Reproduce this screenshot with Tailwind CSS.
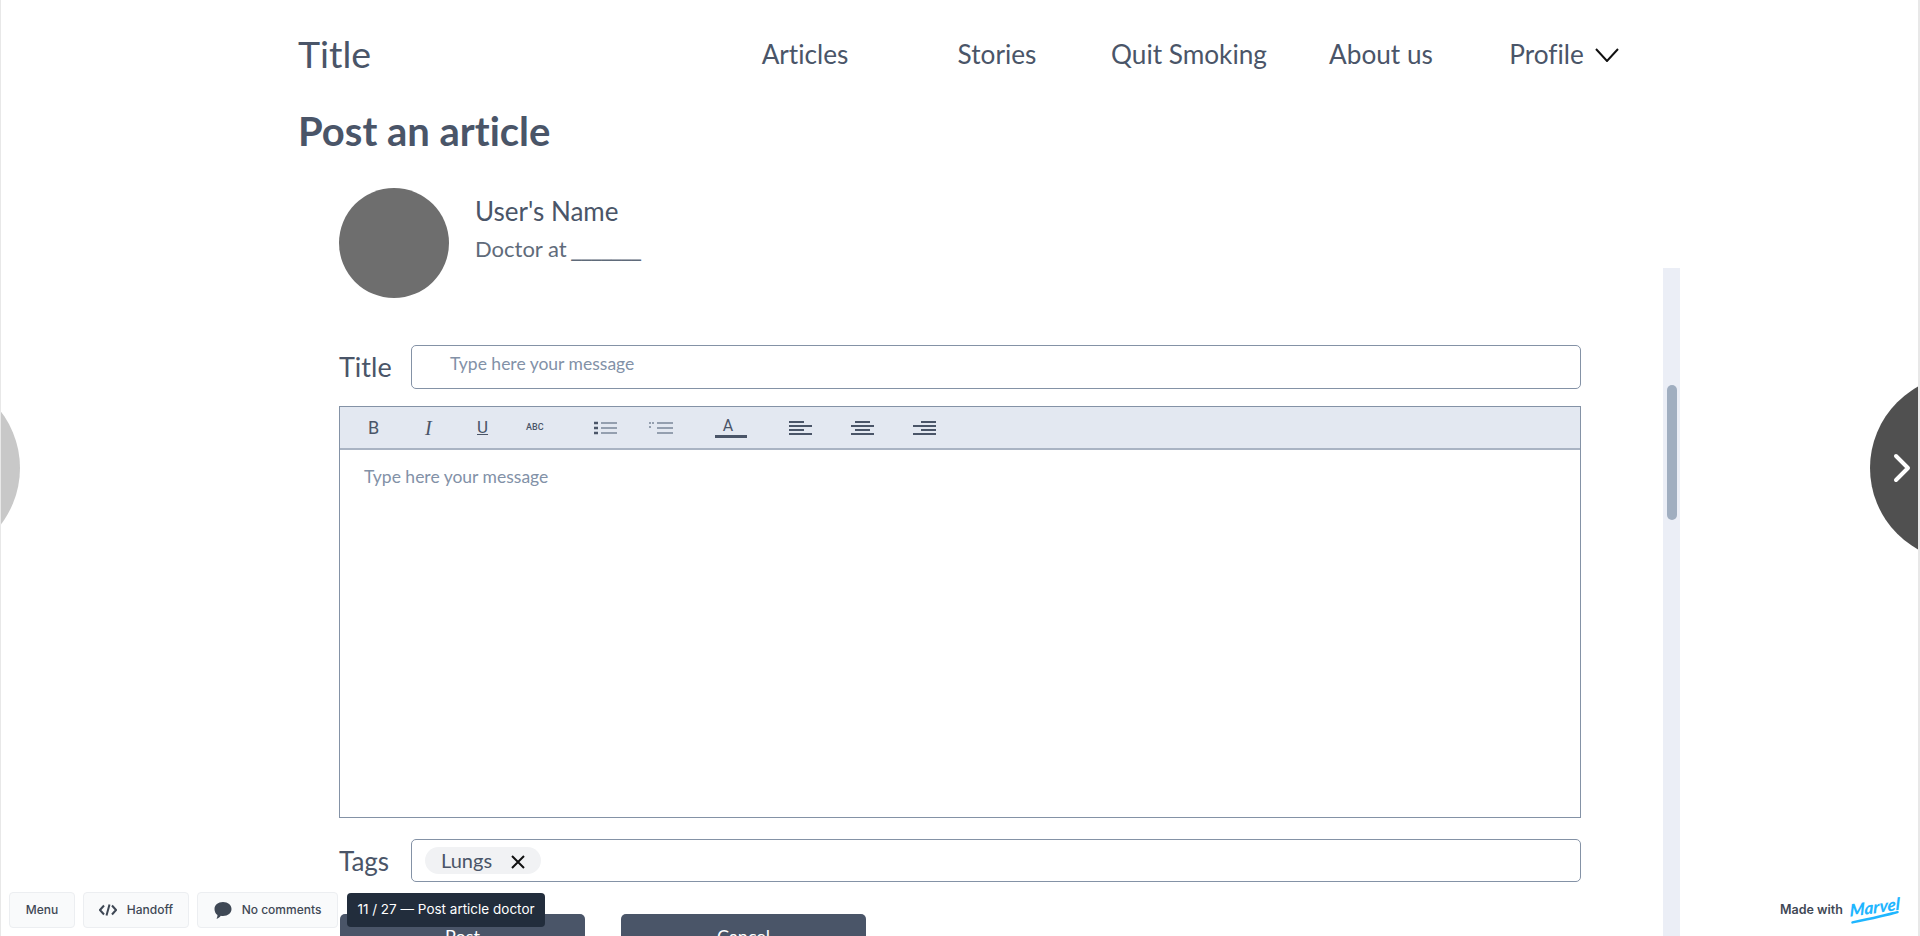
<!DOCTYPE html>
<html lang="en">
<head>
    <meta charset="UTF-8">
    <meta name="viewport" content="width=device-width, initial-scale=1.0">
    <script src="https://cdn.jsdelivr.net/npm/@tailwindcss/browser@4"></script>
    <title>Post an article</title>
</head>
<body class="bg-white">
<div class="relative h-[936px] w-[1920px] overflow-hidden font-['Lato',sans-serif] text-[#4a5568] [font-variant-ligatures:none] border-l border-r-2 border-[#e8e8e8]">

    <!-- page -->
    <div class="ml-[297px] w-[1380px]">
        <header class="flex h-[108px] items-center">
            <div class="w-[411px] text-[37.5px] leading-none">Title</div>
            <nav class="flex pt-[2px] text-[26.2px]">
                <a class="w-[192px] text-center">Articles</a>
                <a class="w-[192px] text-center">Stories</a>
                <a class="w-[192px] text-center">Quit Smoking</a>
                <a class="w-[192px] text-center">About us</a>
                <a class="flex w-[192px] items-center justify-center gap-[11px] pr-[18px]">
                    Profile
                    <svg width="24" height="14" viewBox="0 0 24 14" fill="none" stroke="#111" stroke-width="2"><path d="M1 1l11 12L23 1"/></svg>
                </a>
            </nav>
        </header>

        <h1 class="-mt-[1px] text-[40px] leading-[48px] font-bold">Post an article</h1>

        <div class="ml-[41px] w-[1242px]">
            <div class="mt-[33px] flex items-start gap-[26px]">
                <div class="h-[110px] w-[110px] rounded-full bg-[#6e6e6e]"></div>
                <div class="pt-[5px]">
                    <div class="text-[26px] leading-[36px]">User's Name</div>
                    <div class="mt-[2px] text-[22px] leading-[36px] text-[#5f6b7a]">Doctor at <span class="-ml-[2px] text-[26px] leading-none tracking-[-2px]">_______</span></div>
                </div>
            </div>

            <div class="mt-[47px] flex h-[44px] items-center">
                <label class="w-[72px] text-[27px]">Title</label>
                <div class="h-full flex-1 rounded-[5px] border border-[#8492a6] pl-[38px] text-[17.5px] leading-[35px] text-[#8291a7]">Type here your message</div>
            </div>

            <div class="mt-[17px] border border-[#8492a6]">
                <div class="flex h-[43px] items-center border-b-2 border-[#a9b3c3] bg-[#e3e8f1] text-[#4a5568]">
                    <span class="ml-[28px] w-[10px] font-['Roboto'] text-[18px] leading-none">B</span>
                    <span class="ml-[47px] w-[10px] font-['Liberation_Serif'] text-[20px] leading-none italic">I</span>
                    <span class="ml-[42px] w-[12px] font-['Roboto'] text-[17px] leading-none underline">U</span>
                    <span class="ml-[37px] w-[20px] font-['Roboto'] text-[9px] leading-none font-medium">ABC</span>
                    <svg class="ml-[48px]" width="23" height="14" viewBox="0 0 23 14" fill="none" stroke-width="1.5">
                        <path d="M0 2h4M0 7h4M0 12h4" stroke="#4a5568" stroke-width="2.5"/>
                        <path d="M7 2h16M7 7h16M7 12h16" stroke="#7b8799"/>
                    </svg>
                    <svg class="ml-[32px]" width="24" height="14" viewBox="0 0 24 14" fill="none" stroke-width="1.5">
                        <path d="M0 2h2M3 2h2M0 6h2" stroke="#7b8799" stroke-width="1.5"/>
                        <path d="M8 2h16M8 7h16M8 12h16" stroke="#7b8799"/>
                    </svg>
                    <div class="ml-[42px] flex w-[32px] flex-col items-center">
                        <span class="-ml-[6px] font-['Roboto'] text-[16px] leading-[16px]">A</span>
                        <span class="mt-[1px] h-[3px] w-[32px] bg-[#4a5568]"></span>
                    </div>
                    <svg class="ml-[42px]" width="23" height="14" viewBox="0 0 23 14" stroke="#4a5568" stroke-width="2"><path d="M0 1h15M0 5h23M0 9h15M0 13h23"/></svg>
                    <svg class="ml-[39px]" width="23" height="14" viewBox="0 0 23 14" stroke="#4a5568" stroke-width="2"><path d="M4 1h15M0 5h23M4 9h15M0 13h23"/></svg>
                    <svg class="ml-[39px]" width="23" height="14" viewBox="0 0 23 14" stroke="#4a5568" stroke-width="2"><path d="M8 1h15M0 5h23M8 9h15M0 13h23"/></svg>
                </div>
                <div class="h-[367px] px-[24px] pt-[13px] text-[17.5px] leading-[28px] text-[#8291a7]">Type here your message</div>
            </div>

            <div class="mt-[21px] flex h-[43px] items-center">
                <label class="w-[72px] pt-[2px] text-[26px]">Tags</label>
                <div class="flex h-full flex-1 items-center rounded-[5px] border border-[#8492a6] pl-[13px]">
                    <span class="flex h-[27px] w-[116px] items-center rounded-full bg-[#f1f2f4] pl-[16px] text-[20px]">
                        <span class="-mt-[2px] w-[70px]">Lungs</span>
                        <svg class="mt-[3px]" width="14" height="14" viewBox="0 0 14 14" stroke="#111" stroke-width="2"><path d="M1 1l12 12M13 1L1 13"/></svg>
                    </span>
                </div>
            </div>

            <div class="mt-[32px] flex gap-[36px] pl-[1px]">
                <button class="h-[48px] w-[245px] rounded-[5px] bg-[#4a5568] pb-[3px] text-[18px] text-white">Post</button>
                <button class="h-[48px] w-[245px] rounded-[5px] bg-[#4a5568] pb-[3px] text-[18px] text-white">Cancel</button>
            </div>
        </div>
    </div>

    <!-- scrollbar of the frame -->
    <div class="absolute top-[268px] bottom-0 left-[1662px] w-[17px] bg-[#ebeef6]">
        <div class="absolute top-[117px] left-[4px] h-[135px] w-[10px] rounded-full bg-[#a0aec0]"></div>
    </div>

    <!-- prototype arrows -->
    <div class="absolute top-[375px] -left-[167px] h-[186px] w-[186px] rounded-full bg-[#c8c8c8]"></div>
    <div class="absolute top-[375px] left-[1869px] flex h-[186px] w-[186px] items-center rounded-full bg-[#505050] pl-[23px]">
        <svg width="18" height="30" viewBox="0 0 18 30" fill="none" stroke="#fff" stroke-width="4" stroke-linecap="round" stroke-linejoin="round"><path d="M3 3l12 12L3 27"/></svg>
    </div>

    <!-- marvel bar -->
    <div class="absolute top-[892px] left-[8px] flex items-center gap-[8px] font-['Inter'] text-[12px] font-medium text-[#3f4855]">
        <div class="flex h-[36px] w-[66px] items-center justify-center rounded-[4px] border border-[#eceef1] bg-[#f9fafb]">Menu</div>
        <div class="flex h-[36px] w-[106px] items-center justify-center gap-[10px] rounded-[4px] border border-[#eceef1] bg-[#f9fafb]">
            <svg width="18" height="12" viewBox="0 0 18 12" fill="none" stroke="#3f4855" stroke-width="2"><path d="M5 1.500L1 6l4 4.500M13 1.500L17 6l-4 4.500M10.500 .5l-3 11"/></svg>
            Handoff
        </div>
        <div class="flex h-[36px] w-[141px] items-center justify-center gap-[10px] rounded-[4px] border border-[#eceef1] bg-[#f9fafb]">
            <svg width="18" height="17" viewBox="0 0 18 17" fill="#3f4855"><path d="M9 0c5 0 8.500 3 8.500 7s-3.500 7-8.500 7c-.8 0-1.500-.1-2.200-.2C5.500 15.500 4 16.500 2.500 16.800c.7-1 1-2.300 1-3.800C1.500 11.800.5 9.600.5 7 .5 3 4 0 9 0z"/></svg>
            No comments
        </div>
        <div class="-mt-[1px] ml-[1px] flex h-[34px] w-[198px] items-center justify-center rounded-[4px] bg-[#222d3c] text-[13.5px] font-normal text-white">11 / 27 — Post article doctor</div>
    </div>

    <div class="absolute top-[897px] left-[1779px] flex items-center gap-[8px]">
        <span class="font-['Inter'] text-[12.5px] font-semibold text-[#3f4855]">Made with</span>
        <div class="relative h-[26px] w-[50px] -rotate-[8deg]">
            <span class="-ml-[1px] block -skew-x-[8deg] font-['Lato'] text-[17px] leading-[20px] font-black text-[#1fb6ff] italic">Marvel</span>
            <svg class="absolute top-[17px] -left-[2px]" width="50" height="7" viewBox="0 0 50 7" fill="none" stroke="#1fb6ff" stroke-width="2.500" stroke-linecap="round"><path d="M2 5C18 4 34 3 48 1"/></svg>
        </div>
    </div>
</div>
</body>
</html>
